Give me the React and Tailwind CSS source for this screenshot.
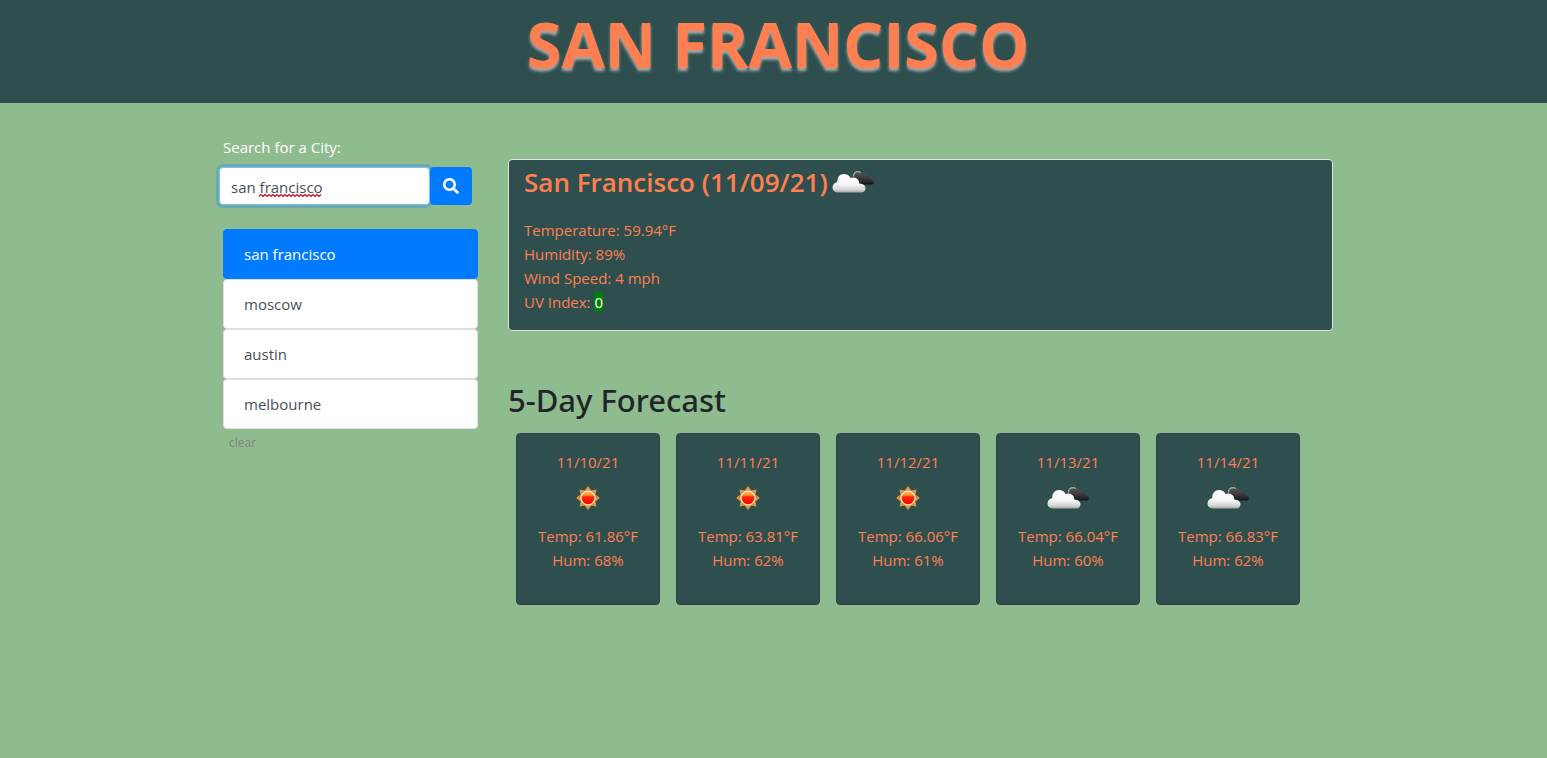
import { useId, useState } from "react";

const history = ["san francisco", "moscow", "austin", "melbourne"];

const forecast = [
  { date: "11/10/21", icon: "sun", temp: "61.86", hum: 68 },
  { date: "11/11/21", icon: "sun", temp: "63.81", hum: 62 },
  { date: "11/12/21", icon: "sun", temp: "66.06", hum: 61 },
  { date: "11/13/21", icon: "clouds", temp: "66.04", hum: 60 },
  { date: "11/14/21", icon: "clouds", temp: "66.83", hum: 62 },
];

function CloudsIcon() {
  const id = useId();
  return (
    <svg width="50" height="50" viewBox="0 0 50 50" role="img" aria-label="Broken clouds" className="inline-block">
      <defs>
        <linearGradient id={id + "d"} x1="0" y1="0" x2="0" y2="1">
          <stop offset="0" stopColor="#5a5a5a" />
          <stop offset="0.5" stopColor="#3c3c3e" />
          <stop offset="0.85" stopColor="#242426" />
          <stop offset="1" stopColor="#0c0c0c" />
        </linearGradient>
        <linearGradient id={id + "w"} x1="0" y1="0" x2="0" y2="1">
          <stop offset="0" stopColor="#ffffff" />
          <stop offset="0.55" stopColor="#f6f6f6" />
          <stop offset="0.85" stopColor="#d4d4d4" />
          <stop offset="1" stopColor="#a4a4a4" />
        </linearGradient>
      </defs>
      <path d="M25 20.500C25 16.500 27 14.200 30 14.200C32.400 14.200 34 15.400 34.800 16.900C37.200 15.900 40 17 40.800 19.800C42.100 22.100 46 22.700 46 25.200C46 27 44.500 27.500 43 27.500H34Z" fill={`url(#${id}d)`} />
      <path d="M25.300 19.500C25.800 16.200 27.500 14.600 30 14.600C31.200 14.600 32 14.900 32.800 15.600" fill="none" stroke="#a4a9aa" strokeWidth="1.200" />
      <path d="M9 35.500C6.500 35.500 4.500 33.300 4.500 30.600C4.500 27.500 6.500 25.400 9.300 24.900C9.300 20 12 17 16 17C19 17 21.300 18.500 22.500 21.100C26.800 19.200 31.200 21.700 31.400 26.800C35 26.700 37.500 28.500 37.500 31.300C37.500 33.900 35.900 35.500 33.500 35.500Z" fill={`url(#${id}w)`} />
    </svg>
  );
}

function SunIcon() {
  const id = useId();
  return (
    <svg width="50" height="50" viewBox="0 0 50 50" role="img" aria-label="Clear sky" className="inline-block">
      <defs>
        <linearGradient id={id} x1="0" y1="0" x2="0" y2="1">
          <stop offset="0" stopColor="#ffc070" />
          <stop offset="0.3" stopColor="#ff8a28" />
          <stop offset="0.42" stopColor="#ff2800" />
          <stop offset="1" stopColor="#f80000" />
        </linearGradient>
      </defs>
      <path d="M25 13L28.300 17.500L33.500 16.500L32.500 21.700L37 25L32.500 28.300L33.500 33.500L28.300 32.500L25 37L21.700 32.500L16.500 33.500L17.500 28.300L13 25L17.500 21.700L16.500 16.500L21.700 17.500Z" fill="#dc9a3a" />
      <circle cx="25" cy="25" r="6.900" fill={`url(#${id})`} stroke="#ffe4cc" strokeWidth="1.300" />
    </svg>
  );
}

export default function App() {
  const [query, setQuery] = useState("san francisco");
  return (
    <div className="min-h-screen bg-[#8fbc8f] pb-8 font-['Open_Sans','Noto_Sans',sans-serif] text-[15px] leading-6 text-[#212529]">
      <header className="h-[103px] bg-[#2f4f4f] pl-[9px] text-center">
        <h1 className="pt-1 text-[63px] leading-[80px] font-bold text-[#ff7f50] [text-shadow:0_3px_3px_#a9a9a9]">SAN FRANCISCO</h1>
      </header>

      <div className="pl-[9px]">
        <main className="mx-auto flex max-w-[1110px] gap-[30px]">
          <aside className="w-[255px] shrink-0 pt-8">
            <form onSubmit={(e) => e.preventDefault()}>
              <label htmlFor="city" className="block h-8 text-white">Search for a City:</label>
              <div className="-ml-1 mr-1.5 flex">
                <div className="relative min-w-0 flex-1">
                  <input
                    id="city"
                    type="text"
                    spellCheck={false}
                    value={query}
                    onChange={(e) => setQuery(e.target.value)}
                    className="h-[38px] w-full rounded-[4px] border border-[#80bdff] bg-white px-[11px] pt-0.5 text-[#495057] shadow-[0_0_0_3px_rgba(0,123,255,0.25)] outline-none"
                  />
                  {query === "san francisco" && (
                    <svg width="63" height="3" viewBox="0 0 63 3" aria-hidden="true" className="pointer-events-none absolute top-[27px] left-10">
                      <path d="M0 2.500L2 .5L4 2.500L6 .5L8 2.500L10 .5L12 2.500L14 .5L16 2.500L18 .5L20 2.500L22 .5L24 2.500L26 .5L28 2.500L30 .5L32 2.500L34 .5L36 2.500L38 .5L40 2.500L42 .5L44 2.500L46 .5L48 2.500L50 .5L52 2.500L54 .5L56 2.500L58 .5L60 2.500L62 .5" fill="none" stroke="#d81830" strokeWidth="1.300" />
                    </svg>
                  )}
                </div>
                <button type="submit" aria-label="Search" className="relative flex h-[38px] w-[42px] items-center justify-center rounded-[4px] bg-[#007bff] text-white">
                  <svg width="16" height="16" viewBox="0 0 512 512" fill="currentColor" aria-hidden="true">
                    <path d="M505 442.700L405.300 343c-4.500-4.500-10.600-7-17-7H372c27.600-35.300 44-79.700 44-128C416 93.100 322.900 0 208 0S0 93.100 0 208s93.100 208 208 208c48.300 0 92.700-16.400 128-44v16.300c0 6.400 2.500 12.500 7 17l99.700 99.700c9.400 9.400 24.600 9.400 33.900 0l28.300-28.300c9.400-9.400 9.400-24.600.1-34zM208 336c-70.700 0-128-57.200-128-128 0-70.700 57.200-128 128-128 70.700 0 128 57.200 128 128 0 70.700-57.200 128-128 128z" />
                  </svg>
                </button>
              </div>
            </form>

            <ul className="mt-6">
              {history.map((city, i) => (
                <li key={city}>
                  <button
                    type="button"
                    className={
                      i === 0
                        ? "block h-[50px] w-full rounded-[4px] border border-[#007bff] bg-[#007bff] px-5 text-left text-white"
                        : "block h-[50px] w-full rounded-[4px] border border-[#dfdfdf] bg-white px-5 text-left text-[#495057]"
                    }
                  >
                    {city}
                  </button>
                </li>
              ))}
            </ul>
            <button type="button" className="block px-1.5 pt-1 text-[12px] leading-5 text-[#808080]">clear</button>
          </aside>

          <div className="min-w-0 flex-1 pt-14">
            <section className="h-[172px] rounded-[4px] border border-[#dfe8df] bg-[#2f4f4f] px-[15px] text-[#ff7f50]">
              <h2 className="flex h-11 items-center text-[26px] leading-[34px] font-semibold">
                San Francisco (11/09/21)
                <CloudsIcon />
              </h2>
              <div className="mt-[14px]">
                <p>Temperature: 59.94°F</p>
                <p>Humidity: 89%</p>
                <p>Wind Speed: 4 mph</p>
                <p>UV Index: <span className="rounded-[4px] bg-[#008000] text-white">0</span></p>
              </div>
            </section>

            <h2 className="mt-12 font-['Noto_Sans','Open_Sans',sans-serif] text-[31px] leading-[42px] font-medium">5-Day Forecast</h2>
            <div className="mt-3 flex flex-wrap gap-4 px-2">
              {forecast.map((day) => (
                <article key={day.date} className="h-[172px] w-36 rounded-[4px] border border-[#294747] bg-[#2f4f4f] pt-4 text-center text-[#ff7f50]">
                  <h3>{day.date}</h3>
                  <div className="flex h-[50px] items-center justify-center pb-0.5">
                    {day.icon === "sun" ? <SunIcon /> : <CloudsIcon />}
                  </div>
                  <p>Temp: {day.temp}°F</p>
                  <p>Hum: {day.hum}%</p>
                </article>
              ))}
            </div>
          </div>
        </main>
      </div>
    </div>
  );
}
